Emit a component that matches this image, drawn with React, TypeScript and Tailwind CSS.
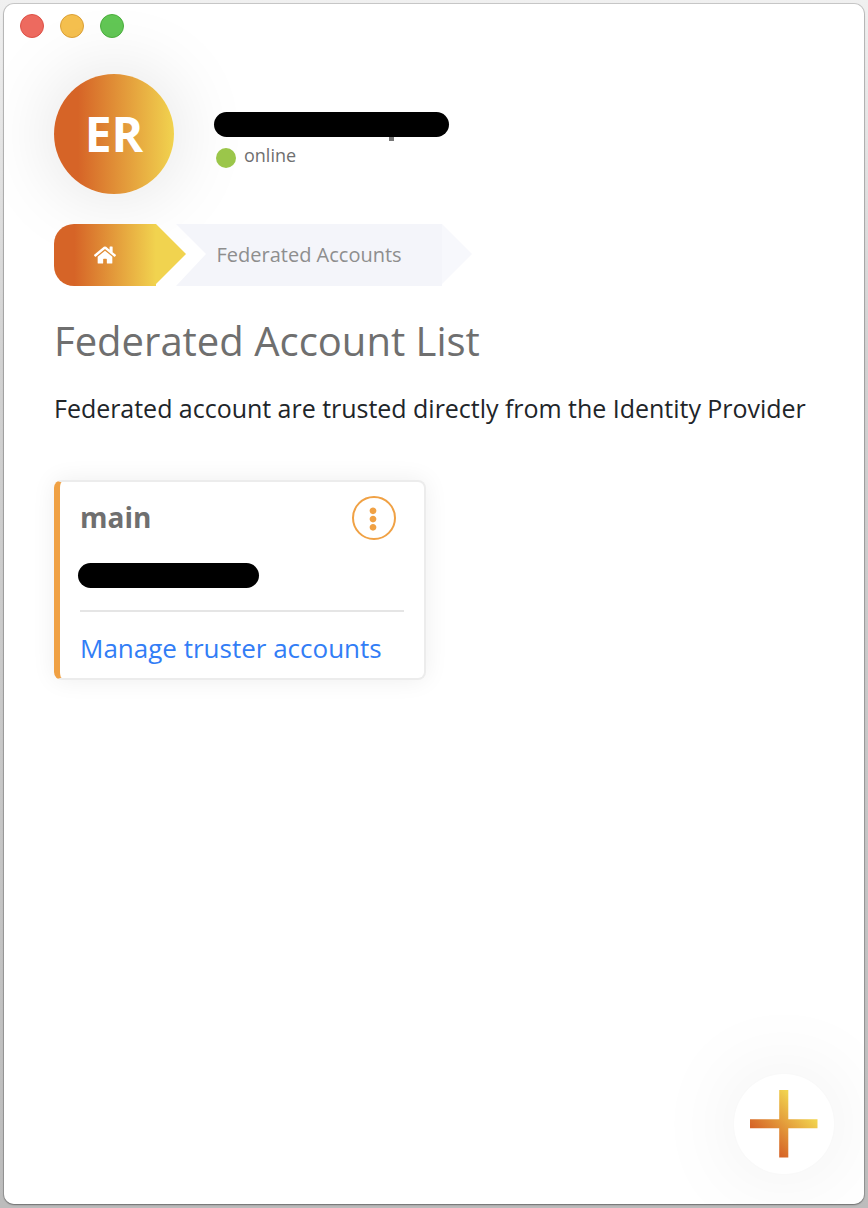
import React from "react";
import { FaEllipsisV, FaHome } from "react-icons/fa";

function TrafficLights() {
  return (
    <div className="flex gap-4 pl-4 pt-[10px]">
      <span className="size-6 rounded-full border border-[#dd5147] bg-[#ed6a5f]" />
      <span className="size-6 rounded-full border border-[#dba037] bg-[#f5c04f]" />
      <span className="size-6 rounded-full border border-[#4bae3d] bg-[#62c755]" />
    </div>
  );
}

function UserHeader() {
  return (
    <header className="mt-9 flex h-[120px]">
      <div className="flex size-[120px] items-center justify-center rounded-full bg-[linear-gradient(90deg,#d66427_0%,#d66427_20%,#f1d34f_100%)] text-[48px] leading-[120px] font-bold text-white shadow-[0_0_80px_rgba(0,0,0,0.13)]">
        <span>ER</span>
      </div>
      <div className="ml-10 pt-[38px]">
        <div className="h-[25px] w-[235px] rounded-full bg-black" />
        <div className="ml-[175px] h-1 w-[5px] bg-[#777]" />
        <div className="-mt-1 flex h-[36px] items-center pl-[2px] text-[18px] text-[#6f6f6f]">
          <span className="mt-[6px] mr-2 size-5 rounded-full bg-[#9bc64a]" />
          <span>online</span>
        </div>
      </div>
    </header>
  );
}

function Breadcrumb() {
  return (
    <nav className="mt-[30px] flex h-[62px]">
      <div className="flex w-[102px] items-center justify-center rounded-l-[20px] bg-[linear-gradient(90deg,#d66427_0%,#d66427_20%,#f1d34f_100%)] text-white">
        <FaHome className="mb-px size-[22px]" />
      </div>
      <div className="h-[60px] w-[30px] bg-[#f1d34f] [clip-path:polygon(0_0,100%_50%,0_100%)]" />
      <div className="-ml-[10px] flex w-[266px] items-center bg-[#f4f5fa] pl-[40.5px] text-[20px] text-[#8e8e8e] [clip-path:polygon(0_0,100%_0,100%_100%,0_100%,30px_30px)]">
        <span>Federated Accounts</span>
      </div>
      <div className="h-[60px] w-[30px] bg-[#f7f8fc] [clip-path:polygon(0_0,100%_50%,0_100%)]" />
    </nav>
  );
}

function AccountCard() {
  return (
    <section className="mt-[52px] h-[200px] w-[372px] rounded-lg border-2 border-l-[6px] border-[#ececec] border-l-[#f0a144] bg-white pt-[14px] pr-5 pl-5 shadow-[0_0_24px_rgba(0,0,0,0.07)]">
      <div className="flex h-11 justify-between pr-2">
        <h2 className="text-[28px] leading-[42px] font-bold text-[#6f6f6f]">main</h2>
        <button className="flex size-11 items-center justify-center rounded-full border-2 border-[#f0a144] text-[#f0a144]">
          <FaEllipsisV className="mt-[2px] mr-[2px] size-6" />
        </button>
      </div>
      <div className="mt-[23px] -ml-[2px] h-[25px] w-[181px] rounded-full bg-black" />
      <div className="mt-[22px] h-[2px] bg-[#e5e5e5]" />
      <a className="mt-4 block text-[26px] leading-[40px] whitespace-nowrap text-[#327df6]">Manage truster accounts</a>
    </section>
  );
}

function AddButton() {
  return (
    <button className="absolute right-[30px] bottom-[30px] flex size-[100px] items-center justify-center rounded-full bg-white shadow-[0_0_90px_rgba(0,0,0,0.08)]">
      <svg width="68" height="68" viewBox="0 0 68 68">
        <defs>
          <linearGradient id="plus" gradientUnits="userSpaceOnUse" x1="12" y1="56" x2="56" y2="12">
            <stop offset="0.1" stopColor="#d66427" />
            <stop offset="0.9" stopColor="#f1d34f" />
          </linearGradient>
        </defs>
        <path d="M29.2 0H38.3V29.2H67.5V38.3H38.3V67.5H29.2V38.3H0V29.2H29.2Z" fill="url(#plus)" />
      </svg>
    </button>
  );
}

export default function App() {
  return (
    <div className="h-[1208px] w-[868px] bg-linear-to-b from-[#f0f0f0] via-[#d2d2d2] via-30% to-[#bcbcbc] p-1 font-['Open_Sans',sans-serif]">
      <div className="h-[1200px] rounded-[10px] shadow-[0_0_0_1px_rgba(0,0,0,0.16),0_1px_2px_rgba(0,0,0,0.3)]">
        <main className="relative h-full overflow-hidden rounded-[10px] bg-white">
          <TrafficLights />
          <div className="px-[50px]">
            <UserHeader />
            <Breadcrumb />
            <h1 className="mt-[25px] text-[40px] leading-[60px] whitespace-nowrap text-[#6f6f6f]">Federated Account List</h1>
            <p className="mt-[17px] text-[25px] leading-[40px] tracking-[-0.025px] whitespace-nowrap text-[#212529]">
              Federated account are trusted directly from the Identity Provider
            </p>
            <AccountCard />
          </div>
          <AddButton />
        </main>
      </div>
    </div>
  );
}
